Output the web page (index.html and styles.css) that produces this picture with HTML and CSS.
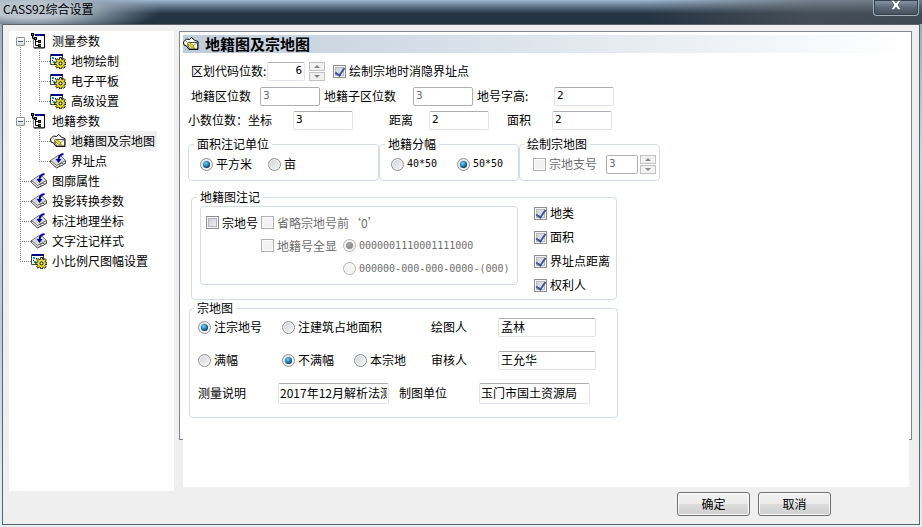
FILE: index.html
```html
<!DOCTYPE html>
<html lang="zh-CN">
  <head>
    <meta charset="UTF-8" />
    <meta name="viewport" content="width=device-width, initial-scale=1.0" />
    <title>CASS92综合设置</title>
    <link rel="stylesheet" href="styles.css">
  </head>
  <body>
    <!-- Shared icons -->
    <svg class="sprite" aria-hidden="true">
      <symbol id="icon-root" viewBox="0 0 16 16">
        <path fill="#fff" stroke="#808080" d="M2.5 1.5h11v13h-11z" />
        <path fill="#000080" d="M4 1h10v2H4z" />
        <path fill="#000" d="M0 0h3v3H0zM3 4h3v3H3zM7 7h3v3H7zM7 11h3v3H7z" />
        <path fill="none" stroke="#000" d="M1.500 3v2.500h3M4.500 6v6.500h3M4.500 8.500h3M13.500 3v12H3" />
        <path fill="#0c9" d="M1 1h1v1H1zM4 5h1v1H4z" />
        <path fill="#e33" d="M8 8h1v1H8z" />
        <path fill="#0a0" d="M8 12h2v1H8z" />
      </symbol>
      <symbol id="icon-gear" viewBox="0 0 16 16">
        <path fill="#fff" stroke="#444" d="M.5 1.500h12v10H.5z" />
        <path fill="#000080" d="M1 1h12v2H1z" />
        <path fill="#0aa" d="M2 4h2v2H2zM3 8h2v2H3z" />
        <path fill="#00f" d="M5 5h1v1H5zM2 7h1v1H2z" />
        <path fill="#e3d92a" stroke="#111" stroke-width=".9" d="M9.500 4.500h2v1.700l1.300.5 1.200-1.200 1.400 1.400-1.200 1.300.5 1.200H16v2h-1.500l-.5 1.200 1.200 1.200-1.500 1.500-1.200-1.100-1 .4v1.200h-2v-1.300l-1.300-.5L7 15.200 5.600 13.800l1.100-1.200-.5-1.200H4.700v-2h1.500l.6-1.200L5.600 7 7 5.600l1.200 1.100 1.300-.5z" />
        <circle cx="10.500" cy="10.400" r="1.500" fill="#fff" stroke="#000" />
      </symbol>
      <symbol id="icon-book" viewBox="0 0 16 16">
        <path fill="#9a9a9a" stroke="#333" stroke-width=".8" d="M.5 7.500v2L6.500 15l9-4.500v-3z" />
        <path fill="#dcdcdc" stroke="#555" stroke-width=".8" d="M.5 7.500L8 2.500l2-.5 5.500 5.500-9 5z" />
        <path fill="none" stroke="#fff" d="M1 9l5.500 4.500L15 9" />
        <path fill="#fff" stroke="#333" stroke-width=".7" d="M9 11.500l3-1.500 1.500 1.500-3 1.500z" />
        <path fill="none" stroke="#0000a0" stroke-width="2" d="M13.500 1C10 1.500 8.500 3.500 8.500 7" />
        <path fill="#0000a0" d="M5.500 6h6l-3 4z" />
      </symbol>
      <symbol id="icon-hand" viewBox="0 0 16 16">
        <path fill="#fff" stroke="#000" d="M.5 6L3.500 3l3 .5 2-2L12 4.500l3 1v8H6L3.500 10 1 9z" />
        <path fill="#fffde0" stroke="#222" stroke-width=".8" d="M5 6.500h9.500v6.500H7L5 10z" />
        <path fill="none" stroke="#777" stroke-width=".8" d="M5 6.500l5 3.500 4.500-3.500M2 4l2 2M3 10l3-1" />
        <path fill="#f3e600" stroke="#333" stroke-width=".5" d="M5.500 6l5 3.500 1 3-3-1-4-4z" />
      </symbol>
    </svg>

    <div class="window">
      <header class="titlebar">
        <h1>CASS92综合设置</h1>
        <button class="close" type="button" aria-label="关闭">
          <svg viewBox="0 0 12 10"><path d="M1 .5h3l2 2.500L8 .5h3L7.800 5 11 9.500H8L6 7 4 9.500H1L4.200 5z" /></svg>
        </button>
      </header>

      <form class="dialog">
        <div class="content">
          <nav class="tree">
            <ul>
              <li class="first"><i class="twig"></i><button class="toggle" type="button" aria-label="折叠"></button><svg><use href="#icon-root" /></svg><a href="#">测量参数</a></li>
              <li><i class="trunk"></i><i class="twig"></i><svg><use href="#icon-gear" /></svg><a href="#">地物绘制</a></li>
              <li><i class="trunk"></i><i class="twig"></i><svg><use href="#icon-gear" /></svg><a href="#">电子平板</a></li>
              <li><i class="trunk"></i><i class="twig end"></i><svg><use href="#icon-gear" /></svg><a href="#">高级设置</a></li>
              <li><i class="twig"></i><button class="toggle" type="button" aria-label="折叠"></button><svg><use href="#icon-root" /></svg><a href="#">地籍参数</a></li>
              <li><i class="trunk"></i><i class="twig"></i><svg><use href="#icon-hand" /></svg><a class="active" href="#">地籍图及宗地图</a></li>
              <li><i class="trunk"></i><i class="twig end"></i><svg><use href="#icon-book" /></svg><a href="#">界址点</a></li>
              <li><i class="twig"></i><svg><use href="#icon-book" /></svg><a href="#">图廓属性</a></li>
              <li><i class="twig"></i><svg><use href="#icon-book" /></svg><a href="#">投影转换参数</a></li>
              <li><i class="twig"></i><svg><use href="#icon-book" /></svg><a href="#">标注地理坐标</a></li>
              <li><i class="twig"></i><svg><use href="#icon-book" /></svg><a href="#">文字注记样式</a></li>
              <li><i class="twig end"></i><svg><use href="#icon-gear" /></svg><a href="#">小比例尺图幅设置</a></li>
            </ul>
          </nav>

          <div class="panel">
            <div class="frame"></div>
            <main class="page">
              <h2><svg><use href="#icon-hand" /></svg>地籍图及宗地图</h2>

              <div class="row row-code">
                <label for="code-digits">区划代码位数:</label>
                <input class="number right" id="code-digits" type="text" value="6">
                <span class="spinner"><button type="button" aria-label="增加"></button><button type="button" aria-label="减少"></button></span>
                <label class="option"><input type="checkbox" checked>绘制宗地时消隐界址点</label>
              </div>
              <div class="row row-digits">
                <label for="zone">地籍区位数</label>
                <input class="number" id="zone" type="text" value="3" disabled>
                <label for="subzone">地籍子区位数</label>
                <input class="number" id="subzone" type="text" value="3" disabled>
                <label for="text-height">地号字高:</label>
                <input class="number" id="text-height" type="text" value="2">
              </div>
              <div class="row row-decimal">
                <label for="coord">小数位数：坐标</label>
                <input class="number" id="coord" type="text" value="3">
                <label for="distance">距离</label>
                <input class="number" id="distance" type="text" value="2">
                <label for="area">面积</label>
                <input class="number" id="area" type="text" value="2">
              </div>

              <div class="groups">
                <fieldset class="unit">
                  <legend>面积注记单位</legend>
                  <div class="row">
                    <label class="option"><input type="radio" name="unit" checked>平方米</label>
                    <label class="option"><input type="radio" name="unit">亩</label>
                  </div>
                </fieldset>
                <fieldset class="sheet">
                  <legend>地籍分幅</legend>
                  <div class="row">
                    <label class="option number"><input type="radio" name="sheet">40*50</label>
                    <label class="option number"><input type="radio" name="sheet" checked>50*50</label>
                  </div>
                </fieldset>
                <fieldset class="draw">
                  <legend>绘制宗地图</legend>
                  <div class="row">
                    <label class="option disabled"><input type="checkbox" disabled>宗地支号</label>
                    <input class="number" type="text" value="3" aria-label="宗地支号位数" disabled>
                    <span class="spinner"><button type="button" aria-label="增加" disabled></button><button type="button" aria-label="减少" disabled></button></span>
                  </div>
                </fieldset>
              </div>

              <fieldset class="notes">
                <legend>地籍图注记</legend>
                <div class="notes-body">
                  <div class="parcel">
                    <label class="option"><input type="checkbox">宗地号</label>
                    <label class="option disabled wide"><input type="checkbox" disabled>省略宗地号前‘0’</label>
                    <label class="option disabled second"><input type="checkbox" disabled>地籍号全显</label>
                    <label class="option disabled number"><input type="radio" name="format" disabled checked>0000001110001111000</label>
                    <label class="option disabled number third"><input type="radio" name="format" disabled>000000-000-000-0000-(000)</label>
                  </div>
                  <div class="items">
                    <label class="option"><input type="checkbox" checked>地类</label>
                    <label class="option"><input type="checkbox" checked>面积</label>
                    <label class="option"><input type="checkbox" checked>界址点距离</label>
                    <label class="option"><input type="checkbox" checked>权利人</label>
                  </div>
                </div>
              </fieldset>

              <fieldset class="map">
                <legend>宗地图</legend>
                <div class="row row-map">
                  <label class="option"><input type="radio" name="label" checked>注宗地号</label>
                  <label class="option wide"><input type="radio" name="label">注建筑占地面积</label>
                  <label for="drawer">绘图人</label>
                  <input id="drawer" type="text" value="孟林">
                </div>
                <div class="row row-map">
                  <label class="option"><input type="radio" name="extent">满幅</label>
                  <label class="option"><input type="radio" name="extent" checked>不满幅</label>
                  <label class="option"><input type="radio" name="extent">本宗地</label>
                  <label for="checker">审核人</label>
                  <input id="checker" type="text" value="王允华">
                </div>
                <div class="row row-survey">
                  <label for="survey">测量说明</label>
                  <input id="survey" type="text" value="2017年12月解析法测绘">
                  <label for="company">制图单位</label>
                  <input id="company" type="text" value="玉门市国土资源局">
                </div>
              </fieldset>
            </main>
          </div>
        </div>

        <footer class="actions">
          <button type="button">确定</button>
          <button type="button">取消</button>
        </footer>
      </form>
    </div>
  </body>
</html>
```
FILE: styles.css
```css
* {
  margin: 0;
  padding: 0;
  box-sizing: border-box;
}

body {
  font-family: "Noto Sans CJK SC", sans-serif;
  font-size: 12px;
  line-height: 16px;
  color: #000;
  background: #dff3f6;
}

input,
button {
  font: inherit;
  color: inherit;
}

.sprite {
  display: none;
}

.window {
  min-height: 100vh;
  display: flex;
  flex-direction: column;
  padding: 0 2px 2px;
  background: linear-gradient(#93a6b8, #c2d8ee 30%, #b4cbe2 60%, #dff3f6);
}

/* Title bar */
.titlebar {
  height: 24px;
  margin: 0 -2px;
  padding: 0 3px;
  display: flex;
  justify-content: space-between;
  align-items: flex-start;
  background:
    radial-gradient(ellipse 130px 26px at 30px 10px, #b9c4ce 30%, rgba(150, 165, 180, 0.6) 65%, transparent),
    linear-gradient(90deg, transparent 70%, rgba(90, 95, 98, 0.6) 88%, rgba(80, 88, 96, 0.6)),
    linear-gradient(#9fb7cf, #70859a 20%, #263646 55%, #243240);
}

h1 {
  font-size: 12px;
  font-weight: normal;
  line-height: 18px;
}

.close {
  width: 46px;
  height: 16px;
  display: flex;
  justify-content: center;
  border: 1px solid #a5afb9;
  border-top: 0;
  border-radius: 0 0 4px 4px;
  background: linear-gradient(#8b9bad, #5b6a7a 50%, #434f5b);
  box-shadow: inset 0 0 0 1px #35414d;
}

.close svg {
  width: 12px;
  height: 10px;
  fill: #fff;
  stroke: #333d47;
  stroke-width: 0.5;
}

/* Dialog body */
.dialog {
  flex: 1;
  display: flex;
  flex-direction: column;
  padding: 6px 7px 8px 6px;
  border: 1px solid #5f6468;
  background: #efefef;
}

.content {
  flex: 1;
  display: flex;
  gap: 5px;
}

/* Tree */
.tree {
  width: 165px;
  padding: 0 0 0 7px;
  background: #fff;
}

.tree ul {
  list-style: none;
}

.tree li {
  position: relative;
  display: flex;
  align-items: center;
  height: 20px;
  padding-left: 4px;
}

.tree svg {
  width: 16px;
  height: 16px;
  margin-right: 3px;
}

.tree a {
  padding: 0 2px;
  line-height: 20px;
  color: #000;
  text-decoration: none;
  white-space: nowrap;
}

.tree a.active {
  background: #efefef;
}

.twig,
.trunk {
  width: 11px;
  height: 20px;
  background:
    repeating-linear-gradient(#808080 0 1px, transparent 1px 2px) 0 0 / 1px 100% no-repeat,
    repeating-linear-gradient(90deg, #808080 0 1px, transparent 1px 2px) 0 10px / 100% 1px no-repeat;
}

.trunk {
  width: 19px;
  background: repeating-linear-gradient(#808080 0 1px, transparent 1px 2px) 0 0 / 1px 100% no-repeat;
}

.twig.end {
  background-size: 1px 10px, 100% 1px;
}

.first .twig {
  background-position: 0 10px;
}

.toggle {
  position: absolute;
  left: 0;
  top: 6px;
  width: 9px;
  height: 9px;
  border: 1px solid #919191;
  border-radius: 1px;
  background:
    linear-gradient(#3c55a5, #3c55a5) center / 5px 1px no-repeat,
    linear-gradient(#fff, #ddd);
}

/* The page lies over the sunken frame and is taller than it */
.panel {
  flex: 1;
  display: grid;
}

.frame,
.page {
  grid-area: 1 / 1;
}

.frame {
  margin-bottom: 51px;
  border: 1px solid #858590;
  background: #fff;
}

.page {
  margin: 4px 3px 4px 4px;
  background: #fff;
}

h2 {
  height: 18px;
  display: flex;
  align-items: center;
  gap: 6px;
  font-size: 15px;
  line-height: 18px;
  background: linear-gradient(90deg, #bfcddb, #fff);
}

h2 svg {
  width: 16px;
  height: 16px;
}

/* Form rows */
.row {
  display: grid;
  align-items: center;
  height: 20px;
  white-space: nowrap;
}

.row-code {
  height: 20px;
  margin: 8px 0 0 8px;
  grid-template-columns: 76px 42px 24px auto;
}

.row-digits {
  margin: 5px 0 0 8px;
  grid-template-columns: 69px 64px 89px 64px 77px 60px;
}

.row-decimal {
  margin: 4px 0 0 5px;
  grid-template-columns: 105px 96px 40px 78px 45px 60px;
}

.number {
  font-family: "DejaVu Sans Mono", "Noto Sans CJK SC", monospace;
  font-size: 10px;
}

input.number {
  font-size: 11px;
}

input[type="text"] {
  width: 60px;
  height: 19px;
  padding: 0 2px 2px;
  border: 1px solid #e2e3ea;
  border-top-color: #abadb3;
  border-radius: 2px;
  background: #fff;
}

input[type="text"]:disabled {
  border-color: #afafaf;
  color: #6d6d6d;
}

.row-code input[type="text"] {
  width: 38px;
  text-align: right;
}

.option {
  display: flex;
  align-items: center;
  gap: 3px;
}

.disabled {
  color: #6d6d6d;
}

.wide {
  grid-column: span 2;
}

input[type="checkbox"],
input[type="radio"] {
  appearance: none;
  flex: none;
  width: 13px;
  height: 13px;
  display: grid;
  place-items: center;
  border: 1px solid #8e8f8f;
  background: linear-gradient(135deg, #c4c9d0, #f6f6f6);
  box-shadow: inset 0 0 0 1px #f4f4f4, inset 0 0 0 2px #b5bac0;
}

input[type="radio"] {
  border-radius: 50%;
  background: linear-gradient(135deg, #cbcfd5, #fafafa);
  box-shadow: inset 0 0 0 1px #f4f4f4;
}

input[type="checkbox"]:disabled,
input[type="radio"]:disabled {
  border-color: #b1b1b1;
  background: #f2f2f2;
  box-shadow: inset 0 0 0 1px #fbfbfb;
}

input[type="checkbox"]:checked::before {
  content: "";
  width: 4px;
  height: 8px;
  margin-bottom: 2px;
  border: solid #3e5498;
  border-width: 0 2px 2px 0;
  transform: rotate(35deg);
}

input[type="radio"]:checked::before {
  content: "";
  width: 7px;
  height: 7px;
  border-radius: 50%;
  background: radial-gradient(circle at 40% 35%, #7fd6f5, #1273a8 50%, #0b2d4a 75%);
}

input[type="radio"]:disabled:checked::before {
  background: radial-gradient(circle at 40% 35%, #aaa, #777);
}

.spinner {
  width: 16px;
  display: grid;
  gap: 1px;
}

.spinner button {
  width: 16px;
  height: 9px;
  display: grid;
  place-items: center;
  border: 1px solid #c2c2c2;
  background: #f1f1f1;
}

.spinner button::before {
  content: "";
  border: solid transparent;
  border-width: 0 3px 3px;
  border-bottom-color: #858585;
}

.spinner button:last-child::before {
  border-width: 3px 3px 0;
  border-top-color: #858585;
}

/* Group boxes */
fieldset {
  min-width: 0;
  border: 1px solid #d3dde6;
  border-radius: 4px;
}

legend {
  margin-left: 5px;
  padding: 0 3px;
  line-height: 12px;
}

.groups {
  display: flex;
  margin: 8px 0 0 5px;
}

.groups fieldset {
  padding: 4px 0 6px 11px;
}

.groups legend {
  margin-left: -6px;
}

.unit {
  width: 191px;
}

.unit .row {
  grid-template-columns: 68px auto;
}

.sheet {
  width: 140px;
}

.sheet .row {
  grid-template-columns: 66px auto;
}

.groups .draw {
  width: 141px;
  padding-left: 13px;
}

.groups .draw legend {
  margin-left: -9px;
}

.draw .row {
  grid-template-columns: 73px 34px 16px;
}

.draw input[type="text"] {
  width: 32px;
}

.notes {
  width: 426px;
  margin: 10px 0 0 8px;
  padding-bottom: 4px;
}

.notes-body {
  display: flex;
  align-items: flex-start;
  gap: 16px;
}

.parcel {
  width: 318px;
  height: 79px;
  margin: 3px 0 0 8px;
  padding: 4px 0 0 5px;
  display: grid;
  grid-template-columns: 55px 82px auto;
  grid-auto-rows: 23px;
  border: 1px solid #d3dde6;
  border-radius: 4px;
  white-space: nowrap;
}

.second {
  grid-column: 2;
}

.third {
  grid-column: 3;
}

.items {
  display: grid;
  grid-auto-rows: 20px;
  gap: 4px;
}

.map {
  width: 429px;
  margin: 2px 0 0 6px;
  padding: 0 0 11px 8px;
}

.map legend {
  margin-left: -4px;
}

.map .row {
  height: 26px;
}

.map .row + .row {
  margin-top: 7px;
}

.row-map {
  grid-template-columns: 84px 72px 77px 67px 98px;
}

.row-map input[type="text"] {
  width: 98px;
}

.row-survey {
  grid-template-columns: 80px 121px 80px 111px;
}

.row-survey input[type="text"] {
  width: 111px;
  height: 21px;
  padding: 0 1px 2px;
}

/* Buttons */
.actions {
  display: flex;
  justify-content: flex-end;
  gap: 8px;
  margin-top: 1px;
  padding-right: 81px;
}

.actions button {
  width: 73px;
  height: 24px;
  border: 1px solid #707070;
  border-radius: 3px;
  background: linear-gradient(#f2f2f2, #ebebeb 50%, #dddddd 50%, #cfcfcf);
  box-shadow: inset 0 0 0 1px #fafafa;
}
```
